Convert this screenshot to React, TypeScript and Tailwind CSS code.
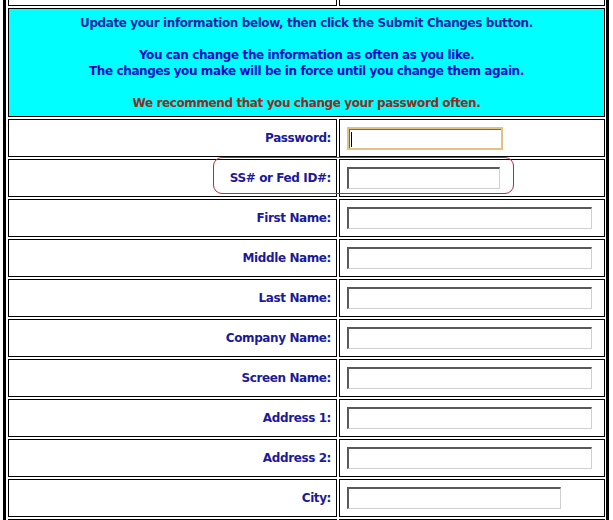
import React from 'react'

const fields = [
  { label: 'Password:', kind: 'focus' },
  { label: 'SS# or Fed ID#:', kind: 'short' },
  { label: 'First Name:', kind: 'long' },
  { label: 'Middle Name:', kind: 'long' },
  { label: 'Last Name:', kind: 'long' },
  { label: 'Company Name:', kind: 'long' },
  { label: 'Screen Name:', kind: 'long' },
  { label: 'Address 1:', kind: 'long' },
  { label: 'Address 2:', kind: 'long' },
  { label: 'City:', kind: 'city' },
]

const inset =
  'block h-[22px] border-t-2 border-l-2 border-r border-b border-t-[#5a5a5a] border-l-[#5a5a5a] border-r-[#cfcfcf] border-b-[#cfcfcf] bg-white'

function Field({ kind }: { kind: string }) {
  if (kind === 'focus') {
    return (
      <div className="ml-[7px] flex h-[23px] w-[156px] items-center border-2 border-[#e2c282] bg-white">
        <div className="relative h-full w-full border-t border-l border-[#6a6a6a]">
          <span className="absolute left-[1px] top-[2px] h-[15px] w-[1px] bg-black" />
        </div>
      </div>
    )
  }
  const width = kind === 'short' ? 'w-[153px]' : kind === 'city' ? 'w-[214px]' : 'w-[245px]'
  return <input type="text" aria-label="field" className={`${inset} ${width} ml-[7px]`} />
}

export default function App() {
  return (
    <div
      className="relative h-[520px] w-[613px] overflow-hidden bg-white"
      style={{ fontFamily: '"DejaVu Sans", Verdana, sans-serif' }}
    >
      <div className="ml-[3px] flex h-full w-[606px] border-x-[3px] border-black pl-[2px] pr-[1px]">
        <div className="grid grid-cols-[329px_266px] content-start gap-[2px]">
          <div className="h-[6px] border-x border-b border-black" />
          <div className="h-[6px] border-x border-b border-black" />

          <div className="col-span-2 flex h-[109px] flex-col items-center border border-black bg-[#00ffff] pt-[6px] pb-[4px] text-[12px] font-bold leading-[16px] tracking-[-0.4px]">
            <p className="text-[#1d1da6]">Update your information below, then click the Submit Changes button.</p>
            <p>&nbsp;</p>
            <p className="text-[#0b0bc4]">You can change the information as often as you like.</p>
            <p className="text-[#0b0bc4]">The changes you make will be in force until you change them again.</p>
            <p>&nbsp;</p>
            <p className="text-[#962a22]">We recommend that you change your password often.</p>
          </div>

          {fields.map((f) => (
            <React.Fragment key={f.label}>
              <div className="flex h-[38px] items-center justify-end border border-black pr-[5px] text-[12px] font-bold tracking-[-0.4px] text-[#1a1a9a]">
                {f.label}
              </div>
              <div className="flex h-[38px] items-center border border-black">
                <Field kind={f.kind} />
              </div>
            </React.Fragment>
          ))}

          <div className="h-[38px] border border-black" />
          <div className="h-[38px] border border-black" />
        </div>
      </div>

      <div className="pointer-events-none absolute left-[213px] top-[157px] h-[37px] w-[301px] rounded-[9px] border border-[#c8242c]" />
    </div>
  )
}
